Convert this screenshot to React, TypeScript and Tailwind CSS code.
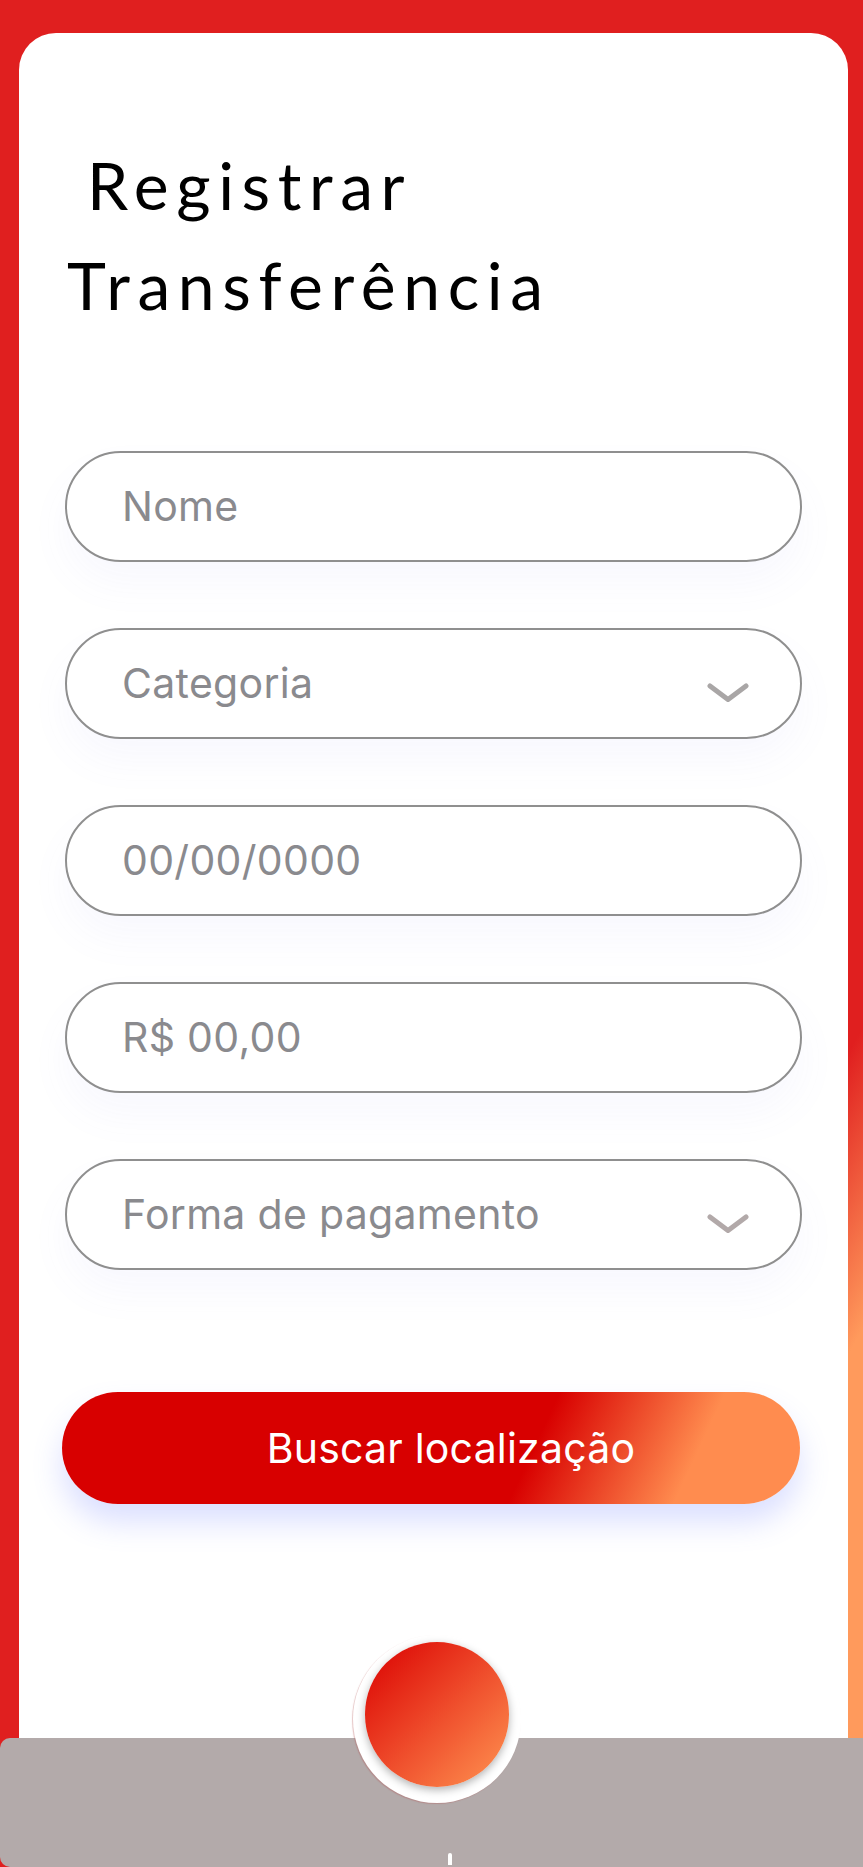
import React from "react";

function Chevron({ color }: { color: string }) {
  return (
    <svg width="42" height="20" viewBox="0 0 42 20" className="absolute right-[51px] top-1/2 mt-[-1px]" fill="none">
      <polyline points="3,3 21,16.5 39,3" stroke={color} strokeWidth="5" strokeLinecap="round" strokeLinejoin="round" />
    </svg>
  );
}

function Field({ label, select, chevronColor }: { label: string; select?: boolean; chevronColor?: string }) {
  return (
    <div className="relative h-[111px] w-full rounded-full border-2 border-[#8f8f8f] bg-white flex items-center pl-[55px] shadow-[0_22px_40px_rgba(110,120,230,0.05)]">
      <span className="text-[41px] leading-none text-[#8a8a8e] tracking-[0.3px]" style={{ fontFamily: "Inter, 'Liberation Sans', sans-serif" }}>
        {label}
      </span>
      {select && <Chevron color={chevronColor || "#a7a2a2"} />}
    </div>
  );
}

export default function App() {
  return (
    <div className="relative min-h-screen w-full flex flex-col bg-[linear-gradient(120deg,#e01f1f_0%,#e01f1f_75%,#ff9a5c_84%,#ff9a5c_100%)] overflow-hidden">
      <div className="flex-1 ml-[19px] mr-[15px] mt-[33px] bg-white rounded-t-[37px] px-[46px] pt-[102px] flex flex-col">
        <h1
          className="text-[66px] leading-[100px] text-black font-normal tracking-[7.6px]"
          style={{ fontFamily: "Lato, 'Noto Sans', sans-serif" }}
        >
          <span className="block pl-[22px]">Registrar</span>
          <span className="block pl-[2px]">Transferência</span>
        </h1>
        <div className="mt-[116px] flex flex-col gap-[66px]">
          <Field label="Nome" />
          <Field label="Categoria" select chevronColor="#a9a6a6" />
          <Field label="00/00/0000" />
          <Field label="R$ 00,00" />
          <Field label="Forma de pagamento" select chevronColor="#b2a9a9" />
        </div>
        <button
          className="mt-[122px] -ml-[3px] w-[738px] h-[112px] rounded-full bg-[linear-gradient(115deg,#d80000_0%,#d80000_63%,#ff8c4f_84%,#ff8c4f_100%)] shadow-[0_18px_30px_rgba(90,110,255,0.22)] flex items-center justify-center pl-[40px]"
        >
          <span className="text-[41px] leading-none text-white tracking-[0.2px]" style={{ fontFamily: "Inter, 'Liberation Sans', sans-serif" }}>
            Buscar localização
          </span>
        </button>
      </div>
      <div className="relative h-[129px] bg-[#b3aaaa] rounded-tl-[10px] rounded-bl-[10px] border-t-2 border-l-2 border-b-2 border-[rgba(179,170,170,0.55)]">
        <div className="absolute left-[351px] top-[-105px] w-[168px] h-[168px] rounded-full bg-white shadow-[-1px_1px_1px_rgba(180,90,90,0.35)]" />
        <div className="absolute left-[363px] top-[-98px] w-[144px] h-[145px] rounded-full bg-[linear-gradient(135deg,#da0000_0%,#ee4a2a_50%,#ff9552_100%)] shadow-[0_3px_9px_rgba(0,0,0,0.3)]" />
        <div className="absolute left-[446px] bottom-0 w-[4px] h-[12px] rounded-t-full bg-white" />
      </div>
    </div>
  );
}
